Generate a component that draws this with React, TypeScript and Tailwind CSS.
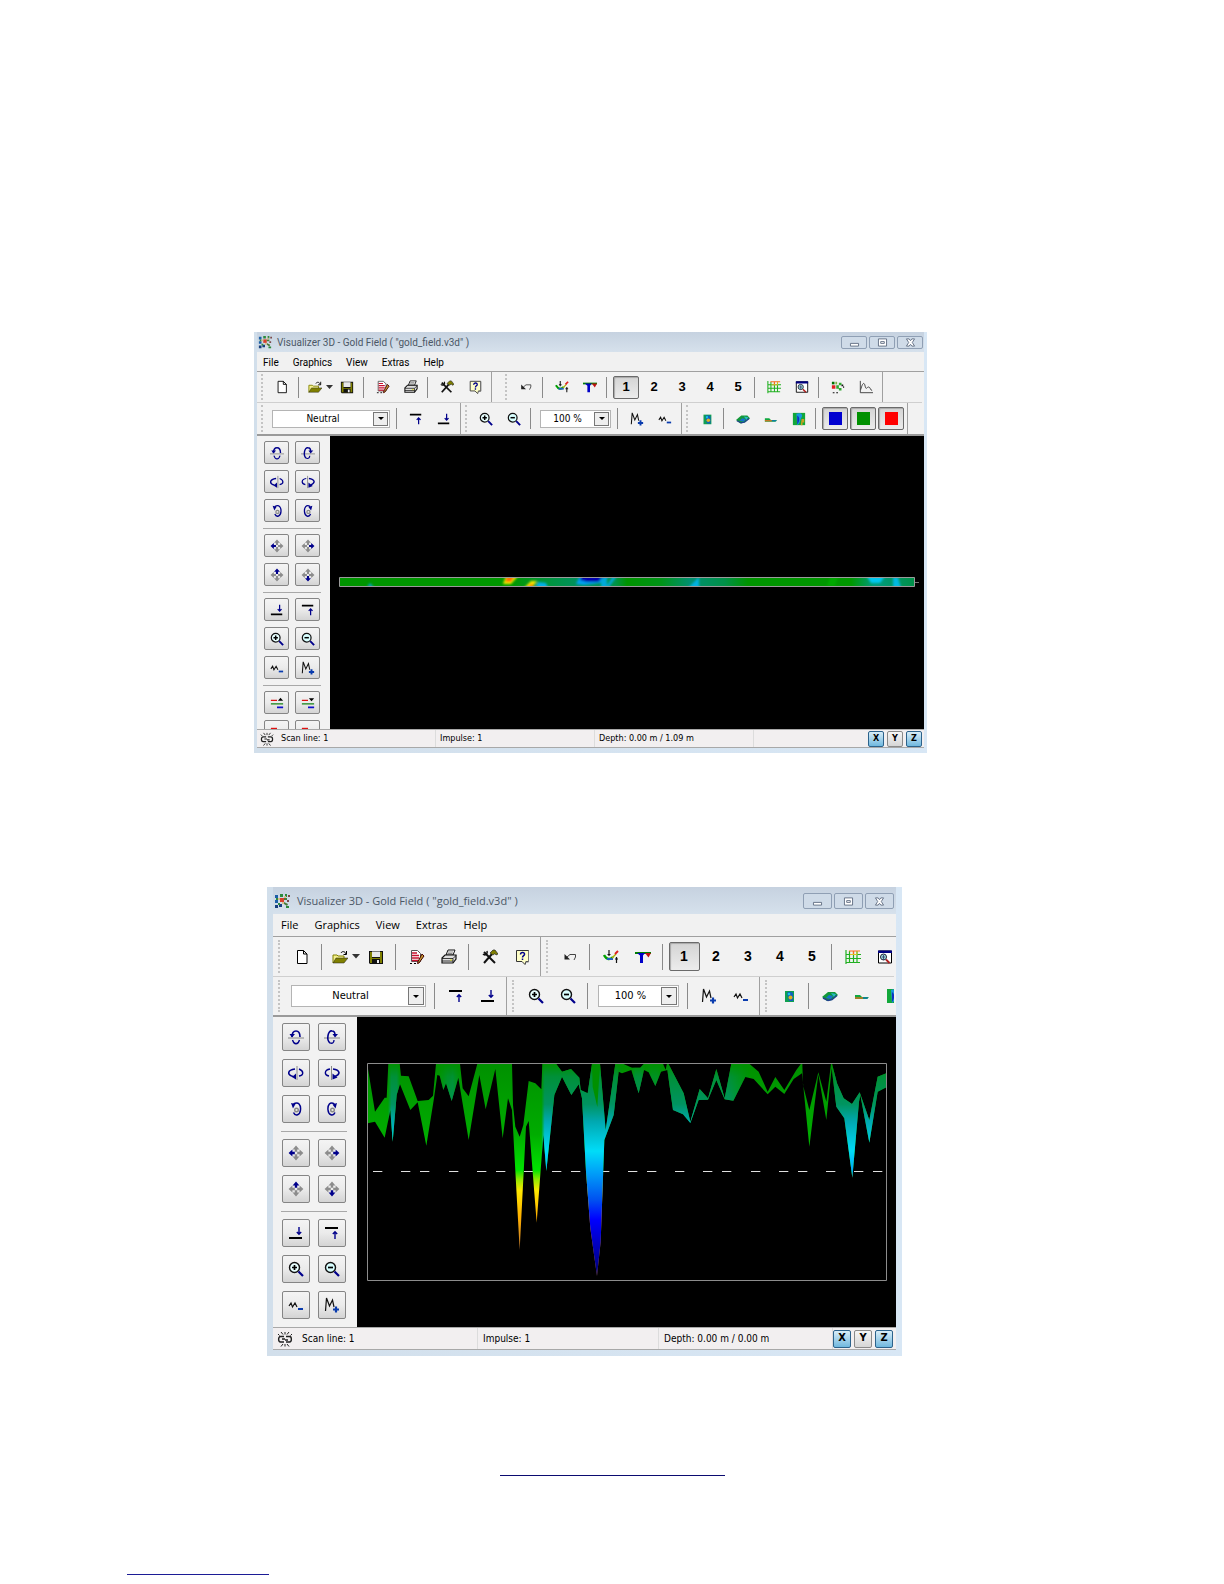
import { useState } from "react";
import type { ReactNode } from "react";
import clsx from "clsx";

const navy = "#00008b";

const icons: Record<string, ReactNode> = {
  logo: (
    <>
      <path d="M1 2h3v3H1zM1 7h3v3H1z" fill="#1d5fa8" />
      <path d="M6 1h3v3H6zM11 1h2v3h-2z" fill="#2d8a3c" />
      <path d="M6 5h4v4H6z" fill="#d8402c" />
      <path d="M10 5h3v2h-3zM10 9l4 2-1 2-3-2z" fill="#4a7c3a" />
      <path d="M1 12h3v3H1zM5 11h3v3H5z" fill="#173f7d" />
      <path d="M4 10h2v2H4zM2 5h2v2H2zM12 13h3v2h-3z" fill="#2d8a3c" />
      <path d="M14 2h2v2h-2zM13 7h2v2h-2z" fill="#7b4a4a" />
      <path d="M4 5h2v2H4zM8 9h2v2H8zM10 3h2v2h-2z" fill="#d9b98a" />
    </>
  ),
  doc: <path d="M3.500 1.500h6l3.500 3.500v9.500h-9.500zM9.500 1.500v3.500h3.500" fill="#fff" stroke="#000" />,
  open: (
    <>
      <path d="M1 14V6h4l1 1h6v3H5z" fill="#f4f08a" stroke="#808000" />
      <path d="M1 14l3-5h12l-4 5z" fill="#808000" stroke="#222" strokeWidth=".5" />
      <path d="M9 4c1-2 4-2 5 1M14.500 2v3.500H11.500" fill="none" stroke="#000" />
    </>
  ),
  save: (
    <>
      <path d="M1 2h14v13H2l-1-1z" fill="#111" />
      <path d="M2 3h2v6h8V3h2v11H2z" fill="#808000" />
      <path d="M4 2.500h8V8H4z" fill="#e8e8e8" />
      <path d="M4 10h8v4H4z" fill="#111" />
      <path d="M9 11h2v3H9z" fill="#eee" />
    </>
  ),
  edit: (
    <>
      <path d="M2.500 1.500h6l3 3v8h-9z" fill="#fff" stroke="#555" />
      <path d="M3 4h5M3 6.500h7M3 9h7M3 11.500h6" stroke="#c8102e" strokeWidth="1.300" />
      <path d="M1 14.500h2M5 14.500h2" stroke="#000" />
      <path d="M13 5l2 2-5 7-1.500.500.500-2z" fill="#c09a30" stroke="#400" />
    </>
  ),
  print: (
    <>
      <path d="M5 6l2-5h7l-2 5z" fill="#fff" stroke="#111" />
      <path d="M7 3h5M6.500 4.500h5" stroke="#555" strokeWidth=".7" />
      <path d="M1 9l3-3h11v4l-3 4H1z" fill="#ddd" stroke="#111" strokeWidth="1.200" />
      <path d="M1 9.500h11l3-3M1 12h11M12 9.500V14" fill="none" stroke="#111" strokeWidth=".8" />
      <path d="M9 11h2" stroke="#dd0" />
    </>
  ),
  tools: (
    <>
      <path d="M2 14L10 5" stroke="#111" strokeWidth="2" />
      <path d="M2 3l11 11" stroke="#111" strokeWidth="2" />
      <path d="M8 4l3-3h2l3 4-2 1-1-1.500-2 1.500z" fill="#808000" stroke="#222" strokeWidth=".7" />
      <path d="M1 5c2 2 5 0 4-3" fill="none" stroke="#111" strokeWidth="1.500" />
    </>
  ),
  help: (
    <>
      <path d="M2.500 1.500h12v11H12l-1 3-3-3H2.500z" fill="#ffffc8" stroke="#333" />
      <path d="M14.500 2v11h-3" fill="none" stroke="#777" />
      <path d="M6.500 5.500c0-3 4.500-2.500 4 0-.300 1.200-2 1.300-2 3M8.500 9.500v1.500" fill="none" stroke={navy} strokeWidth="1.500" />
    </>
  ),
  undo: (
    <>
      <path d="M5 8l3-2.500h5.500V8l-1.500 3" fill="none" stroke="#444" />
      <path d="M2.500 5v5.500H8z" fill="#222" />
    </>
  ),
  levels: (
    <>
      <path d="M1 6c3 5 6 5 9 2" fill="none" stroke="#00a000" strokeWidth="2.400" />
      <path d="M4 10h6" stroke="#2060c0" strokeWidth="2" />
      <path d="M9 9l4-4" stroke="#b0b000" strokeWidth="1.500" />
      <path d="M12 5l3-3" stroke="#e02020" strokeWidth="2" />
      <path d="M6 1v6M4.500 5.500h3M13.500 8v6M12 10h3" stroke="#111" strokeWidth="1.200" />
    </>
  ),
  funnel: (
    <>
      <path d="M0 4h16" stroke="#008000" strokeWidth="2" />
      <path d="M2 4h8l-2 2.500V14H5V6.500z" fill="#0000c8" />
      <path d="M10 4h6l-2.500 4.500z" fill="#c01010" />
    </>
  ),
  grid: (
    <>
      <path d="M1 1v14M4.500 2v12M8.500 2v12M12 2v12M1 5.500h15M1 9.500h15M1 13.500h14" stroke="#20b020" strokeWidth="1.200" />
      <path d="M4 2h11M8.500 2v4" stroke="#ff6a20" strokeWidth="1.200" />
      <path d="M5 5.500h7M12 2v4" stroke="#e0c020" />
    </>
  ),
  preview: (
    <>
      <path d="M1.500 2h13v12h-13z" fill="#fff" stroke="#000" />
      <path d="M1 1.500h14v2.500H1z" fill="#000080" />
      <circle cx="6.500" cy="8" r="3" fill="#9fe0e0" stroke="#223" />
      <path d="M5 8h3M6.500 6v5" stroke="#336" strokeWidth=".8" />
      <path d="M9 10.500l3.500 3.500" stroke="#b02020" strokeWidth="1.800" />
    </>
  ),
  dots: (
    <>
      <path d="M1 2h3v3H1z" fill="#007000" />
      <path d="M1 6h4v4H1z" fill="#e02020" />
      <path d="M6 6h3v4H6zM9 3h3v3H9zM9 9h3v3H9z" fill="#30a830" />
      <path d="M5 2h2v3H5z" fill="#80b040" />
      <path d="M12 5h2v2h-2zM14 7h1v2h-1zM2 14h2v1H2zM6 14h2v1H6z" fill="#111" />
    </>
  ),
  curve: (
    <>
      <path d="M1.500 1v13.500H16" fill="none" stroke="#333" />
      <path d="M2 11c2-8 4-9 5-4s2 1 4 1 2 4 4 4" fill="none" stroke="#333" />
    </>
  ),
  toTop: (
    <>
      <path d="M1 3h13" stroke="#000" strokeWidth="2" />
      <path d="M11 14V7M8.800 9L11 6.800 13.200 9" fill="none" stroke={navy} strokeWidth="1.400" />
    </>
  ),
  toBottom: (
    <>
      <path d="M1 13h13" stroke="#000" strokeWidth="2" />
      <path d="M11 2v7M8.800 7L11 9.200 13.200 7" fill="none" stroke={navy} strokeWidth="1.400" />
    </>
  ),
  zoomIn: (
    <>
      <circle cx="6.500" cy="6.500" r="5" fill="#e8ffff" stroke="#111" strokeWidth="1.400" />
      <path d="M4 6.500h5M6.500 4v5" stroke="#000" strokeWidth="1.700" />
      <path d="M10.500 10.500l4.500 4.500" stroke={navy} strokeWidth="2.200" />
    </>
  ),
  zoomOut: (
    <>
      <circle cx="6.500" cy="6.500" r="5" fill="#d8ffff" stroke="#111" strokeWidth="1.400" />
      <path d="M4 6.500h5" stroke="#000" strokeWidth="1.700" />
      <path d="M10.500 10.500l4.500 4.500" stroke={navy} strokeWidth="2.200" />
    </>
  ),
  ampUp: (
    <>
      <path d="M1.500 14l1-13 3 8 3-6 1.500 7" fill="none" stroke="#111" strokeWidth="1.200" />
      <path d="M9 12.500h6M12 9.500v6" stroke="#0a3cae" strokeWidth="2.200" />
    </>
  ),
  ampDown: (
    <>
      <path d="M1 9l2-3 1.500 4L7 6l2 4" fill="none" stroke="#111" strokeWidth="1.200" />
      <path d="M10 12h5" stroke="#0a3cae" strokeWidth="2" />
    </>
  ),
  mapSmall: (
    <>
      <path d="M4 3h9v11H4z" fill="#10a050" />
      <path d="M6 5c2-2 4-1 6 0v8H8z" fill="#1060c0" />
      <circle cx="9.500" cy="9.500" r="2" fill="#e0b020" />
      <circle cx="8" cy="6" r="1.300" fill="#10c8e0" />
    </>
  ),
  map3d: (
    <>
      <path d="M0 9l6-5h7l3 3-6 5-5 1z" fill="#12983a" />
      <path d="M4 10l3-3 4 1-2 3z" fill="#1870d0" />
      <path d="M9 5l5 1-2 3z" fill="#28b8c8" />
      <path d="M1 10l5 2.500 4-1 5-4" fill="none" stroke="#204090" strokeWidth="1.400" />
    </>
  ),
  mapSide: (
    <>
      <path d="M1 7h5l2 2h7l-2 2H1z" fill="#10a840" />
      <path d="M1 10h8" stroke="#e07020" strokeWidth="1.400" />
      <path d="M9 10h5" stroke="#1070c0" strokeWidth="1.200" />
    </>
  ),
  mapTop: (
    <>
      <path d="M1 1h14v14H1z" fill="#12a83a" />
      <path d="M5 2c5-2 8 1 6 4s-1 6-5 9z" fill="#1898e0" />
      <path d="M6 4c3 2 3 6 0 10z" fill="#1030c0" />
      <path d="M11 8h3v4h-2v3h-2z" fill="#c8a020" />
    </>
  ),
  rotUp: (
    <>
      <path d="M0 9h16" stroke="#888" />
      <path d="M4 8c0-8 8-8 8 0" fill="none" stroke={navy} strokeWidth="1.600" />
      <path d="M1.500 5H7L4 8.500z" fill={navy} />
      <path d="M4.500 11c1.500 5 5.500 5 7 0" fill="none" stroke={navy} strokeWidth="1.300" />
    </>
  ),
  rotDown: (
    <>
      <path d="M0 9h16" stroke="#888" />
      <path d="M6 14C2 11 4 1 8 2c2 0 3 2 3 4" fill="none" stroke={navy} strokeWidth="1.600" />
      <path d="M8.500 5h5.500L11 8.500z" fill={navy} />
      <path d="M6 14c3 1 4-1 4-3" fill="none" stroke={navy} strokeWidth="1.300" />
    </>
  ),
  rotLeft: (
    <>
      <path d="M9 1v14" stroke="#888" />
      <path d="M7 4C-1 5-1 10 5 11.500" fill="none" stroke={navy} strokeWidth="1.600" />
      <path d="M8 8.500v6L4 12z" fill={navy} />
      <path d="M11 4c5 2 5 6 0 7" fill="none" stroke={navy} strokeWidth="1.400" />
    </>
  ),
  rotRight: (
    <>
      <path d="M7.500 1v14" stroke="#888" />
      <path d="M6 4C0 5 0 10 5 11" fill="none" stroke={navy} strokeWidth="1.400" />
      <path d="M9 4c7 1 8 5 2 7.500" fill="none" stroke={navy} strokeWidth="1.600" />
      <path d="M8.500 8.500v6l5-2z" fill={navy} />
    </>
  ),
  turnLeft: (
    <>
      <path d="M5.500 3c5-3 7.500 1 7 6s-5 7-7 2.500" fill="none" stroke={navy} strokeWidth="1.500" />
      <path d="M3 2l4.500 1L5 7.500z" fill={navy} />
      <circle cx="8.500" cy="9" r="1.800" fill="none" stroke="#888" strokeWidth="1.400" />
    </>
  ),
  turnRight: (
    <>
      <path d="M10.500 3C6 0 3.500 4 4 9s5 7 7 2.500" fill="none" stroke={navy} strokeWidth="1.500" />
      <path d="M13 2L8.500 3.500l3 4z" fill={navy} />
      <circle cx="8.500" cy="9" r="1.800" fill="none" stroke="#888" strokeWidth="1.400" />
    </>
  ),
  link: (
    <>
      <path d="M7 5.500H3.500C1 5.500 1 11 3.500 11H7M5 8h3M9 5.500h3.500c2.500 0 2.500 5.500 0 5.500H9M8 9h3" fill="none" stroke="#222" strokeWidth="1.400" />
      <path d="M4 1l2 2.500M8 1v2.500M12 1l-2 2.500M4 15.500L6 13M8 15.500V13M12 15.500L10 13M1 3l1.500 1.500M15 3l-1.500 1.500" stroke="#222" />
    </>
  ),
  layerUp: (
    <>
      <path d="M1 5h7" stroke="#e01010" strokeWidth="1.400" />
      <path d="M1 9h14" stroke="#108010" strokeWidth="1.400" />
      <path d="M8 13h7" stroke="#1010c8" strokeWidth="2" />
      <path d="M9 5.500h6L12 2z" fill="#000" />
    </>
  ),
  layerDown: (
    <>
      <path d="M1 5h7" stroke="#e01010" strokeWidth="1.400" />
      <path d="M1 9h14" stroke="#108010" strokeWidth="1.400" />
      <path d="M8 13h7" stroke="#1010c8" strokeWidth="2" />
      <path d="M9 2.500h6L12 6z" fill="#000" />
    </>
  ),
  layerMove: (
    <>
      <path d="M1 4h7" stroke="#e01010" strokeWidth="1.600" />
      <path d="M8 9h7" stroke="#108010" strokeWidth="1.400" />
    </>
  ),
};

const arrow = "M6.800 6.800V4.400H4.600L8 .6l3.400 3.800H9.200v2.400z";

// four way arrow, one direction is highlighted
function Move({ dir }: { dir: number }) {
  return (
    <>
      {[0, 90, 180, 270].map((a) => (
        <path key={a} d={arrow} fill={a === dir ? navy : "#8c8c8c"} transform={`rotate(${a} 8 8)`} />
      ))}
    </>
  );
}
icons.moveUp = <Move dir={0} />;
icons.moveRight = <Move dir={90} />;
icons.moveDown = <Move dir={180} />;
icons.moveLeft = <Move dir={270} />;

const small = {
  icon: "size-[14px]",
  frame: "px-[3px] pb-[5px] font-['Roboto','Noto_Sans',sans-serif]",
  title: "h-5 px-px text-[10px]",
  titleGap: "ml-[3px]",
  caption: "h-[13px] w-[26px]",
  menu: "h-[19px] gap-[14px] px-[6px] pt-px text-[10px]",
  row: "h-[31px]",
  rowTop: "h-[31px]",
  cell: "w-7",
  press: "h-[23px] w-[26px]",
  sep: "w-2 pl-[2px]",
  sepLine: "h-[21px]",
  grip: "w-[11px] pl-1",
  open: "w-[22px]",
  caret: "w-[7px]",
  gap: "mr-[9px]",
  combo: "mx-1 h-[18px] text-[10px]",
  comboWide: "w-[118px]",
  comboNarrow: "w-[71px]",
  drop: "w-[15px]",
  digit: "text-[13px]",
  swatch: "size-[13px]",
  side: "w-[73px] py-[5px]",
  pad: "gap-x-[6px] gap-y-[6px] px-[7px]",
  padButton: "h-[23px] w-[25px]",
  rule: "mr-[9px] ml-[6px] mt-[6px] mb-[5px]",
  status: "h-[19px] text-[9px]",
  link: "w-5",
  panel: "w-[159px] pl-1",
  axis: "h-4 w-4 text-[9px]",
  axes: "gap-[3px] pr-[2px]",
};

const large: typeof small = {
  icon: "size-4",
  frame: "px-[6px] pb-[6px] font-['Open_Sans','Noto_Sans',sans-serif]",
  title: "h-[27px] pt-px pr-[2px] pl-px text-[11px]",
  titleGap: "ml-[5px]",
  caption: "h-4 w-[29px]",
  menu: "h-[22px] gap-4 px-2 pt-px text-[11px]",
  row: "h-[38px]",
  rowTop: "h-10",
  cell: "w-8",
  press: "h-[29px] w-[31px]",
  sep: "w-[9px] pl-[3px]",
  sepLine: "h-[26px]",
  grip: "w-[13px] pl-[5px]",
  open: "w-[25px]",
  caret: "w-2",
  gap: "",
  combo: "mx-[5px] h-[22px] text-[11px]",
  comboWide: "w-[135px]",
  comboNarrow: "w-[81px]",
  drop: "w-4",
  digit: "text-[14px]",
  swatch: "size-[15px]",
  side: "w-[84px] py-[6px]",
  pad: "gap-x-2 gap-y-2 px-[9px]",
  padButton: "h-7 w-7",
  rule: "mr-[10px] ml-2 mt-2 mb-[7px]",
  status: "h-[23px] text-[10px]",
  link: "w-6",
  panel: "w-[181px] pl-[5px]",
  axis: "size-[18px] text-[11px]",
  axes: "gap-[3px] pr-[3px]",
};

type Theme = typeof small;

function Icon({ name, t }: { name: string; t: Theme }) {
  return (
    <svg viewBox="0 0 16 16" className={clsx("shrink-0", t.icon)} aria-hidden="true">
      {icons[name]}
    </svg>
  );
}

function Tool({ name, t, width }: { name: string; t: Theme; width?: string }) {
  return (
    <button type="button" aria-label={name} className={clsx("flex h-full shrink-0 items-center justify-center", width ?? t.cell)}>
      <Icon name={name} t={t} />
    </button>
  );
}

function Sep({ t }: { t: Theme }) {
  return (
    <div className={clsx("shrink-0", t.sep)}>
      <div className={clsx("w-px bg-[#8a8a8a]", t.sepLine)} />
    </div>
  );
}

function Group({ t, className, children }: { t: Theme; className?: string; children: ReactNode }) {
  return (
    <div className={clsx("flex h-full shrink-0 items-center border-r border-[#a0a0a0] pr-[2px]", className)}>
      <div className={clsx("h-[85%] shrink-0", t.grip)}>
        <div className="h-full border-l-2 border-dotted border-[#c4c4c4]" />
      </div>
      {children}
    </div>
  );
}

function Combo({ t, width, label, options }: { t: Theme; width: string; label: string; options: string[] }) {
  return (
    <div className={clsx("relative shrink-0 border border-[#b4b4b4] bg-white", t.combo, width)}>
      <select
        aria-label={label}
        className="h-full w-full appearance-none pr-4 text-center [text-align-last:center] font-['DejaVu_Sans_Condensed','DejaVu_Sans',sans-serif] text-black outline-none"
      >
        {options.map((o) => (
          <option key={o}>{o}</option>
        ))}
      </select>
      <span className={clsx("pointer-events-none absolute inset-y-px right-px flex items-center justify-center border border-[#777] bg-[#eee]", t.drop)}>
        <svg viewBox="0 0 6 3" className="w-[6px]">
          <path d="M0 0h6L3 3z" />
        </svg>
      </span>
    </div>
  );
}

function Pressed({ t, children }: { t: Theme; children: ReactNode }) {
  return (
    <div className={clsx("flex shrink-0 justify-center", t.cell)}>
      <button
        type="button"
        className={clsx("flex items-center justify-center rounded-[2px] border border-[#6a6a6a] bg-linear-to-b from-[#d4d4d4] to-[#ececec] shadow-[inset_1px_1px_1px_#a8a8a8]", t.press)}
      >
        {children}
      </button>
    </div>
  );
}

function Digits({ t }: { t: Theme }) {
  return (
    <div className={clsx("flex shrink-0 items-center font-['Liberation_Sans',sans-serif] font-bold text-black", t.digit)}>
      <Pressed t={t}>1</Pressed>
      {[2, 3, 4, 5].map((n) => (
        <button key={n} type="button" className={clsx("shrink-0", t.cell)}>
          {n}
        </button>
      ))}
    </div>
  );
}

function Toolbars({ t }: { t: Theme }) {
  return (
    <div className="overflow-hidden border-t border-[#a0a0a0] border-b-2 border-b-[#9a9a9a] bg-[#f2f2f2]">
      <div className={clsx("mr-[2px] flex overflow-hidden border-b border-[#cfcfcf]", t.rowTop)}>
        <Group t={t} className={t.gap}>
          <Tool t={t} name="doc" />
          <Sep t={t} />
          <Tool t={t} name="open" width={t.open} />
          <button type="button" aria-label="Recent files" className={clsx("shrink-0", t.caret)}>
            <svg viewBox="0 0 7 4" className="w-full">
              <path d="M0 0h7L3.500 4z" fill="#333" />
            </svg>
          </button>
          <Tool t={t} name="save" />
          <Sep t={t} />
          <Tool t={t} name="edit" />
          <Tool t={t} name="print" />
          <Sep t={t} />
          <Tool t={t} name="tools" />
          <Tool t={t} name="help" />
        </Group>
        <Group t={t}>
          <Tool t={t} name="undo" />
          <Sep t={t} />
          <Tool t={t} name="levels" />
          <Tool t={t} name="funnel" />
          <Sep t={t} />
          <Digits t={t} />
          <Sep t={t} />
          <Tool t={t} name="grid" />
          <Tool t={t} name="preview" />
          <Sep t={t} />
          <Tool t={t} name="dots" />
          <Tool t={t} name="curve" />
        </Group>
      </div>
      <div className={clsx("mr-[2px] flex overflow-hidden", t.row)}>
        <Group t={t}>
          <Combo t={t} width={t.comboWide} label="Filter" options={["Neutral"]} />
          <Sep t={t} />
          <Tool t={t} name="toTop" />
          <Tool t={t} name="toBottom" />
        </Group>
        <Group t={t}>
          <Tool t={t} name="zoomIn" />
          <Tool t={t} name="zoomOut" />
          <Sep t={t} />
          <Combo t={t} width={t.comboNarrow} label="Zoom" options={["100 %"]} />
          <Sep t={t} />
          <Tool t={t} name="ampUp" />
          <Tool t={t} name="ampDown" />
        </Group>
        <Group t={t}>
          <Tool t={t} name="mapSmall" />
          <Sep t={t} />
          <Tool t={t} name="map3d" />
          <Tool t={t} name="mapSide" />
          <Tool t={t} name="mapTop" />
          <Sep t={t} />
          <Pressed t={t}>
            <span className={clsx("bg-[#0000d0]", t.swatch)} />
          </Pressed>
          <Pressed t={t}>
            <span className={clsx("bg-[#009000]", t.swatch)} />
          </Pressed>
          <Pressed t={t}>
            <span className={clsx("bg-[#ff0000]", t.swatch)} />
          </Pressed>
        </Group>
      </div>
    </div>
  );
}

const padGroups = [
  ["rotUp", "rotDown", "rotLeft", "rotRight", "turnLeft", "turnRight"],
  ["moveLeft", "moveRight", "moveUp", "moveDown"],
  ["toBottom", "toTop", "zoomIn", "zoomOut", "ampDown", "ampUp"],
];

// the canvas sets the height, buttons that do not fit are cut off
function Sidebar({ t, groups }: { t: Theme; groups: string[][] }) {
  return (
    <div className={clsx("shrink-0 overflow-hidden bg-[#f2f2f2] [contain:size]", t.side)}>
      {groups.map((names, i) => (
        <div key={i}>
          {i > 0 && <div className={clsx("h-px bg-[#a8a8a8]", t.rule)} />}
          <div className={clsx("flex flex-wrap", t.pad)}>
            {names.map((name, j) => (
              <button
                key={j}
                type="button"
                aria-label={name}
                className={clsx("flex items-center justify-center rounded-[2px] border border-[#858585] bg-linear-to-b from-[#f4f4f4] via-[#ebebeb] to-[#d4d4d4]", t.padButton)}
              >
                <Icon name={name} t={t} />
              </button>
            ))}
          </div>
        </div>
      ))}
    </div>
  );
}

function StatusBar({ t, depth }: { t: Theme; depth: string }) {
  const [axes, setAxes] = useState(["X", "Z"]);
  const toggle = (a: string) =>
    setAxes(axes.includes(a) ? axes.filter((x) => x !== a) : [...axes, a]);

  return (
    <div className={clsx("flex items-center border-y border-[#a8a8a8] bg-[#f2eff0] font-['DejaVu_Sans_Condensed','DejaVu_Sans',sans-serif] text-black", t.status)}>
      <div className={clsx("flex shrink-0 items-center justify-center", t.link)}>
        <Icon name="link" t={t} />
      </div>
      {["Scan line: 1", "Impulse: 1", depth].map((text, i) => (
        <div
          key={text}
          className={clsx("flex h-full items-center whitespace-nowrap border-r border-[#dcdcdc]", i < 2 && "shrink-0", t.panel)}
        >
          {text}
        </div>
      ))}
      <div className={clsx("ml-auto flex shrink-0", t.axes)}>
        {["X", "Y", "Z"].map((a) => (
          <button
            key={a}
            type="button"
            onClick={() => toggle(a)}
            className={clsx(
              "flex items-center justify-center rounded-[2px] border font-['DejaVu_Sans_Condensed','DejaVu_Sans',sans-serif] font-bold",
              t.axis,
              axes.includes(a)
                ? "border-[#2c628b] bg-linear-to-b from-[#d8edf8] to-[#6fb8de]"
                : "border-[#8a8a8a] bg-linear-to-b from-[#f6f6f6] to-[#d6d6d6]"
            )}
          >
            {a}
          </button>
        ))}
      </div>
    </div>
  );
}

function Caption({ t, label, children }: { t: Theme; label: string; children: ReactNode }) {
  return (
    <button type="button" aria-label={label} className={clsx("flex items-center justify-center rounded-[2px] border border-[#8f9fb4] bg-[#cfdbe8]", t.caption)}>
      <svg viewBox="0 0 12 10" className="h-[9px] w-[11px]" fill="none" stroke="#5d6b80" strokeWidth="1">
        {children}
      </svg>
    </button>
  );
}

function Window({ t, depth, groups, children }: { t: Theme; depth: string; groups: string[][]; children: ReactNode }) {
  return (
    <section className={clsx("w-full bg-linear-to-r from-[#d2dfeb] to-[#d8e7f5]", t.frame)}>
      <div className={clsx("flex items-center gap-[2px] bg-linear-to-b from-[#c6d2e0] to-[#d6e1ec] text-[#4c5866]", t.title)}>
        <Icon name="logo" t={t} />
        <h2 className={clsx("flex-1 whitespace-nowrap", t.titleGap)}>
          Visualizer 3D - Gold Field ( "gold_field.v3d" )
        </h2>
        <Caption t={t} label="Minimize">
          <path d="M1.500 6h9v3h-9z" fill="#fff" />
        </Caption>
        <Caption t={t} label="Maximize">
          <path d="M1.500 1h9v8h-9z" fill="#fff" />
          <path d="M4 4h4v2H4z" />
        </Caption>
        <Caption t={t} label="Close">
          <path d="M1.500 1h3L6 3l1.500-2h3L8 5l2.500 4h-3L6 7 4.500 9h-3L4 5z" fill="#fff" />
        </Caption>
      </div>
      <nav className={clsx("flex items-center bg-[#f1f1f1] text-black", t.menu)}>
        {["File", "Graphics", "View", "Extras", "Help"].map((m) => (
          <button key={m} type="button">
            {m}
          </button>
        ))}
      </nav>
      <Toolbars t={t} />
      <div className="flex bg-[#f2f2f2]">
        <Sidebar t={t} groups={groups} />
        <div className="min-w-0 flex-1 bg-black">{children}</div>
      </div>
      <StatusBar t={t} depth={depth} />
    </section>
  );
}

function ScanStrip() {
  return (
    <svg viewBox="0 0 594 293" className="block w-full">
      <defs>
        <linearGradient id="strip">
          <stop offset="0" stopColor="#009400" />
          <stop offset=".3" stopColor="#009800" />
          <stop offset=".36" stopColor="#00943c" />
          <stop offset=".42" stopColor="#009060" />
          <stop offset=".48" stopColor="#009448" />
          <stop offset=".5" stopColor="#009400" />
          <stop offset=".56" stopColor="#009418" />
          <stop offset=".61" stopColor="#009070" />
          <stop offset=".67" stopColor="#009048" />
          <stop offset=".71" stopColor="#009400" />
          <stop offset=".89" stopColor="#009800" />
          <stop offset=".93" stopColor="#009c80" />
          <stop offset="1" stopColor="#009048" />
        </linearGradient>
        <filter id="soft" x="-5%" y="-50%" width="110%" height="200%">
          <feGaussianBlur stdDeviation="1" />
        </filter>
        <clipPath id="stripClip">
          <path d="M10 142h574v8H10z" />
        </clipPath>
      </defs>
      <path d="M9.500 141.500h575v9h-575z" fill="url(#strip)" stroke="#9a9a9a" />
      <g clipPath="url(#stripClip)">
        <g filter="url(#soft)">
          <path d="M37 151l3-4 4 4z" fill="#00a0c0" />
          <path d="M173 148l3-8h12l-7 8z" fill="#f0f000" />
          <path d="M175 146l2-6h8l-4 6z" fill="#ff7000" />
          <path d="M194 152l7-7h6l-5 7z" fill="#f0e800" />
          <path d="M196 153l5-5h3l-3 5z" fill="#ff8000" />
          <path d="M205 152l3-6 8 1 2 5z" fill="#00b0e8" />
          <path d="M246 148l4-8h30l-10 7-8 1-8 1z" fill="#00a0f0" />
          <path d="M250 144l2-5h24l-8 7h-11z" fill="#0000b0" />
          <path d="M271 142h6v10h-6zM276 151l7-11h4l-8 11z" fill="#00a8d8" />
          <path d="M358 152l11-11v11z" fill="#00b0e0" />
          <path d="M536 139h20l-6 8h-9z" fill="#00c8f0" />
          <path d="M563 141h5l3 11h-8z" fill="#00b8e0" />
          <path d="M500 141h8l-3 9h-8z" fill="#00a800" />
        </g>
      </g>
      <path d="M585 146.500h4" stroke="#777" />
    </svg>
  );
}

const profile =
  "17,35 39,170 68,128 74,128 79,26 113,26 117,62 140,64 167,138 200,135 213,122 222,26 294,26 302,100 320,124 346,26 450,26 453,150 460,215 473,245 484,210 500,78 520,85 538,103 541,26 582,26 600,50 627,42 652,68 656,105 677,115 690,26 714,26 731,225 745,130 760,26 783,26 " +
  "810,38 835,38 846,26 903,26 911,44 915,26 919,26 965,115 985,200 1013,102 1038,130 1063,42 1088,130 1108,26 1162,26 1190,50 1217,110 1240,66 1267,105 1303,45 1317,26 1321,26 1323,90 1342,165 1369,52 1393,140 1407,26 1410,26 1425,85 1445,130 1470,147 1493,112 1522,195 1547,65 1573,55 " +
  "1573,97 1547,110 1522,263 1495,120 1491,140 1471,368 1447,190 1423,155 1409,40 1393,195 1369,58 1342,275 1320,55 1295,72 1267,117 1240,95 1217,118 1175,72 1150,66 1114,137 1088,133 1063,75 1038,134 1010,135 985,204 963,178 933,165 916,45 897,50 880,93 860,52 846,45 830,115 808,45 780,55 " +
  "770,50 755,180 727,255 716,560 705,663 685,520 672,350 660,130 650,88 628,120 600,65 577,120 553,348 544,240 524,503 500,198 492,215 473,585 450,165 438,130 422,250 400,42 371,163 352,60 320,255 289,68 269,138 252,85 244,105 233,62 226,60 216,130 193,272 167,142 145,165 114,88 104,120 92,260 85,165 68,248 39,200 17,205";

const dashes = [33, 117, 174, 261, 345, 402, 486, 570, 627, 714, 798, 855, 939, 1023, 1080, 1167, 1251, 1308, 1392, 1476, 1533];

// [x, opacity of the cold palette]
const coldStops = [
  [0, 0], [78, 0], [88, 1], [104, 1], [116, 0], [230, 0], [256, 0.7], [272, 0.9], [296, 0], [538, 0],
  [548, 1], [765, 1], [780, 0], [806, 0], [820, 1], [840, 1], [850, 0], [870, 0.6], [885, 0.6], [905, 0],
  [925, 1], [1100, 1], [1165, 0], [1403, 0], [1420, 1], [1573, 1],
];

function ProfileChart() {
  return (
    <svg viewBox="-15 -114 1617 930" className="block w-full">
      <defs>
        <linearGradient id="warm" gradientUnits="userSpaceOnUse" x1="0" x2="0" y1="26" y2="586">
          <stop offset="0" stopColor="#009000" />
          <stop offset=".38" stopColor="#00ac00" />
          <stop offset=".57" stopColor="#00e400" />
          <stop offset=".62" stopColor="#90e800" />
          <stop offset=".68" stopColor="#ffe800" />
          <stop offset=".82" stopColor="#ffb000" />
          <stop offset="1" stopColor="#c07830" />
        </linearGradient>
        <linearGradient id="cold" gradientUnits="userSpaceOnUse" x1="0" x2="0" y1="26" y2="666">
          <stop offset="0" stopColor="#009000" />
          <stop offset=".06" stopColor="#009038" />
          <stop offset=".19" stopColor="#009460" />
          <stop offset=".27" stopColor="#00a8b0" />
          <stop offset=".41" stopColor="#00dcf8" />
          <stop offset=".51" stopColor="#00a0f8" />
          <stop offset=".64" stopColor="#0050f0" />
          <stop offset=".73" stopColor="#0000ff" />
          <stop offset="1" stopColor="#000070" />
        </linearGradient>
        <linearGradient id="coldX" gradientUnits="userSpaceOnUse" x1="0" x2="1573" y1="0" y2="0">
          {coldStops.map(([x, o]) => (
            <stop key={x} offset={x / 1573} stopColor="#fff" stopOpacity={o} />
          ))}
        </linearGradient>
        <mask id="coldMask" maskUnits="userSpaceOnUse" x="0" y="0" width="1600" height="700">
          <path d="M0 0h1600v700H0z" fill="url(#coldX)" />
        </mask>
      </defs>
      {dashes.map((x) => (
        <path key={x} d={`M${x} 349.500h28`} stroke="#e0e0e0" strokeWidth="3" />
      ))}
      <polygon points={profile} fill="url(#warm)" />
      <polygon points={profile} fill="url(#cold)" mask="url(#coldMask)" />
      <path d="M690 26h24l-8 130-14-60z" fill="#009000" />
      <path d="M16.500 25.500h1557v651h-1557z" fill="none" stroke="#8c8c8c" strokeWidth="3" />
    </svg>
  );
}

function App() {
  return (
    <main className="min-h-screen bg-white pt-[332px] pb-2">
      <div className="pr-[297px] pl-[254px]">
        <Window
          t={small}
          depth="Depth: 0.00 m / 1.09 m"
          groups={[...padGroups, ["layerUp", "layerDown", "layerMove", "layerMove"]]}
        >
          <ScanStrip />
        </Window>
      </div>
      <div className="mt-[134px] pr-[322px] pl-[267px]">
        <Window t={large} depth="Depth: 0.00 m / 0.00 m" groups={padGroups}>
          <ProfileChart />
        </Window>
      </div>
      <div className="mt-[103px] flex justify-center">
        <a href="#" aria-label="Website" className="block h-[17px] w-[225px] border-b border-[#0b0b70]" />
      </div>
      <div className="mt-[82px] pl-[127px]">
        <a href="#" aria-label="Manual" className="block h-[17px] w-[142px] border-b border-[#1c1c96]" />
      </div>
    </main>
  );
}

export default App;
